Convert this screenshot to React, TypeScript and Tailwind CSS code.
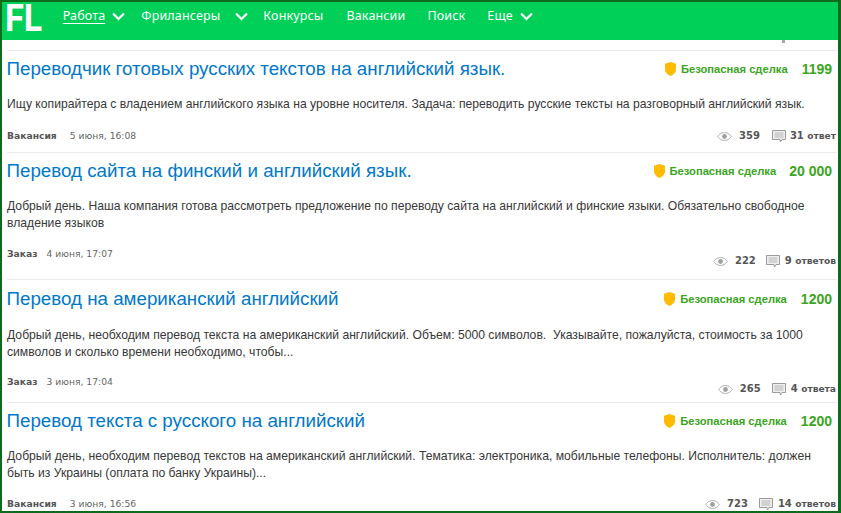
import React from "react";

const Chevron = () => (
  <svg width="13" height="9" viewBox="0 0 13 9" fill="none" stroke="#fff" strokeWidth="2.2" className="shrink-0">
    <path d="M1 1.5 L6.5 7 L12 1.5" />
  </svg>
);

const Shield = () => (
  <svg width="11" height="14" viewBox="0 0 11 14" className="shrink-0">
    <path d="M5.5 0 L11 1.8 V7.5 C11 10.5 8 12.8 5.5 14 C3 12.8 0 10.5 0 7.5 V1.8 Z" fill="#ffbb00" />
  </svg>
);

const Eye = () => (
  <svg width="15" height="9" viewBox="0 0 15 9" fill="none" className="shrink-0">
    <path d="M0.7 4.5 C3 1.2 5.5 0.6 7.5 0.6 C9.5 0.6 12 1.2 14.3 4.5 C12 7.8 9.5 8.4 7.5 8.4 C5.5 8.4 3 7.8 0.7 4.5 Z" stroke="#a8a8a8" strokeWidth="1" />
    <circle cx="7.5" cy="4.5" r="2.4" fill="#a0a0a0" />
  </svg>
);

const Comment = () => (
  <svg width="14" height="13" viewBox="0 0 14 13" fill="none" className="shrink-0 block">
    <path d="M0.5 0.5 H13.5 V9.5 H10 L8.5 12 L8 9.5 H0.5 Z" fill="#f0f0f0" stroke="#9a9a9a" />
    <path d="M2.5 3 H11.5 M2.5 5 H11.5 M2.5 7 H11.5" stroke="#b4b4b4" />
  </svg>
);

type Job = {
  title: string;
  desc: string[];
  price: string;
  kind: string;
  date: string;
  views: string;
  num: string;
  word: string;
  height: string;
  titleClass: string;
  descMargin: string;
  metaMargin: string;
  rightShift: string;
  dateGap: string;
  statGap: string;
  numGap: string;
  priceGap: string;
};

const jobs: Job[] = [
  {
    title: "Переводчик готовых русских текстов на английский язык.",
    desc: ["Ищу копирайтера с владением английского языка на уровне носителя. Задача: переводить русские тексты на разговорный английский язык."],
    price: "1199",
    kind: "Вакансия",
    date: "5 июня, 16:08",
    views: "359",
    num: "31",
    word: "ответ",
    height: "h-[102px]",
    titleClass: "mt-[6px]",
    descMargin: "mt-[15px]",
    metaMargin: "mt-[16px]",
    rightShift: "",
    dateGap: "ml-[13px]",
    statGap: "ml-[12px]",
    numGap: "ml-[4px]",
    priceGap: "ml-[14px]",
  },
  {
    title: "Перевод сайта на финский и английский язык.",
    desc: [
      "Добрый день. Наша компания готова рассмотреть предложение по переводу сайта на английский и финские языки. Обязательно свободное",
      "владение языков",
    ],
    price: "20 000",
    kind: "Заказ",
    date: "4 июня, 17:07",
    views: "222",
    num: "9",
    word: "ответов",
    height: "h-[127px]",
    titleClass: "mt-[6px]",
    descMargin: "mt-[15px]",
    metaMargin: "mt-[15px]",
    rightShift: "translate-y-[7px]",
    dateGap: "ml-[9px]",
    statGap: "ml-[10px]",
    numGap: "ml-[5px]",
    priceGap: "ml-[13px]",
  },
  {
    title: "Перевод на американский английский",
    desc: [
      "Добрый день, необходим перевод текста на американский английский. Объем: 5000 символов.  Указывайте, пожалуйста, стоимость за 1000",
      "символов и сколько времени необходимо, чтобы...",
    ],
    price: "1200",
    kind: "Заказ",
    date: "3 июня, 17:04",
    views: "265",
    num: "4",
    word: "ответа",
    height: "h-[123px]",
    titleClass: "mt-[7px]",
    descMargin: "mt-[16px]",
    metaMargin: "mt-[14px]",
    rightShift: "translate-y-[7px]",
    dateGap: "ml-[9px]",
    statGap: "ml-[11px]",
    numGap: "ml-[5px]",
    priceGap: "ml-[14px]",
  },
  {
    title: "Перевод текста с русского на английский",
    desc: [
      "Добрый день, необходим перевод текстов на американский английский. Тематика: электроника, мобильные телефоны. Исполнитель: должен",
      "быть из Украины (оплата по банку Украины)...",
    ],
    price: "1200",
    kind: "Вакансия",
    date: "3 июня, 16:56",
    views: "723",
    num: "14",
    word: "ответов",
    height: "h-[111px]",
    titleClass: "mt-[6px]",
    descMargin: "mt-[15px]",
    metaMargin: "mt-[15px]",
    rightShift: "",
    dateGap: "ml-[13px]",
    statGap: "ml-[11px]",
    numGap: "ml-[5px]",
    priceGap: "ml-[14px]",
  },
];

const navItem = "text-[12.5px] leading-[16px] tracking-[0.15px] text-white whitespace-nowrap";

function Row({ job }: { job: Job }) {
  return (
    <div className={`${job.height} shrink-0 border-t border-[#ebebeb] font-['Liberation_Sans',sans-serif]`}>
      <div className={`${job.titleClass} flex items-center justify-between pr-[5px]`}>
        <h2 className="-ml-[0.5px] text-[18.75px] leading-[24px] text-[#0078c8] font-normal whitespace-nowrap">{job.title}</h2>
        <div className="flex items-center">
          <Shield />
          <span className="ml-[5px] text-[11.2px] font-bold text-[#3aa51e] whitespace-nowrap">Безопасная сделка</span>
          <span className={`${job.priceGap} text-[14px] font-bold text-[#3aa51e] whitespace-nowrap`}>{job.price}</span>
        </div>
      </div>
      <div className={`${job.descMargin} text-[12.17px] leading-[17px] text-[#383838]`}>
        {job.desc.map((l) => (
          <div key={l} className="whitespace-pre">{l}</div>
        ))}
      </div>
      <div className={`${job.metaMargin} flex items-center justify-between leading-[14px] font-['DejaVu_Sans',sans-serif] pr-[1px]`}>
        <div className="flex items-center whitespace-nowrap text-[9.2px]">
          <span className="font-bold text-[#555555]">{job.kind}</span>
          <span className={`${job.dateGap} text-[#666666]`}>{job.date}</span>
        </div>
        <div className={`${job.rightShift} flex items-center whitespace-nowrap text-[#555555] font-bold text-[10px]`}>
          <Eye />
          <span className="ml-[7px]">{job.views}</span>
          <span className={job.statGap}><Comment /></span>
          <span className={job.numGap}>{job.num} <span className="text-[9.1px]">{job.word}</span></span>
        </div>
      </div>
    </div>
  );
}

export default function App() {
  return (
    <div className="w-[841px] h-[513px] overflow-hidden bg-white border-t-2 border-l-2 border-r-[3px] border-b-2 border-[#0e6b1e] flex flex-col">
      <header className="h-[38px] shrink-0 bg-[#00d058] flex items-start font-['Noto_Sans','Roboto',sans-serif]">
        <span className="ml-[3px] mt-[-1px] shrink-0 text-[37px] leading-[34px] font-bold text-white font-['Inter',sans-serif] tracking-[-1px] origin-left scale-x-[0.9] whitespace-nowrap">FL</span>
        <nav className="ml-[17px] mt-[6px] flex items-center">
          <span className={`${navItem} underline underline-offset-[3px]`}>Работа</span>
          <span className="ml-[7px]"><Chevron /></span>
          <span className={`${navItem} ml-[16px]`}>Фрилансеры</span>
          <span className="ml-[15px]"><Chevron /></span>
          <span className={`${navItem} ml-[15px]`}>Конкурсы</span>
          <span className={`${navItem} ml-[23px]`}>Вакансии</span>
          <span className={`${navItem} ml-[22px]`}>Поиск</span>
          <span className={`${navItem} ml-[22px]`}>Еще</span>
          <span className="ml-[7px]"><Chevron /></span>
        </nav>
      </header>
      <main className="relative flex-1 pl-[5px] pr-[1px] pt-[10px] overflow-hidden">
        <span className="absolute left-[780px] top-0 h-[3px] w-[3px] bg-[#a8a8a8]" />
        {jobs.map((j) => (
          <Row key={j.title} job={j} />
        ))}
      </main>
    </div>
  );
}
